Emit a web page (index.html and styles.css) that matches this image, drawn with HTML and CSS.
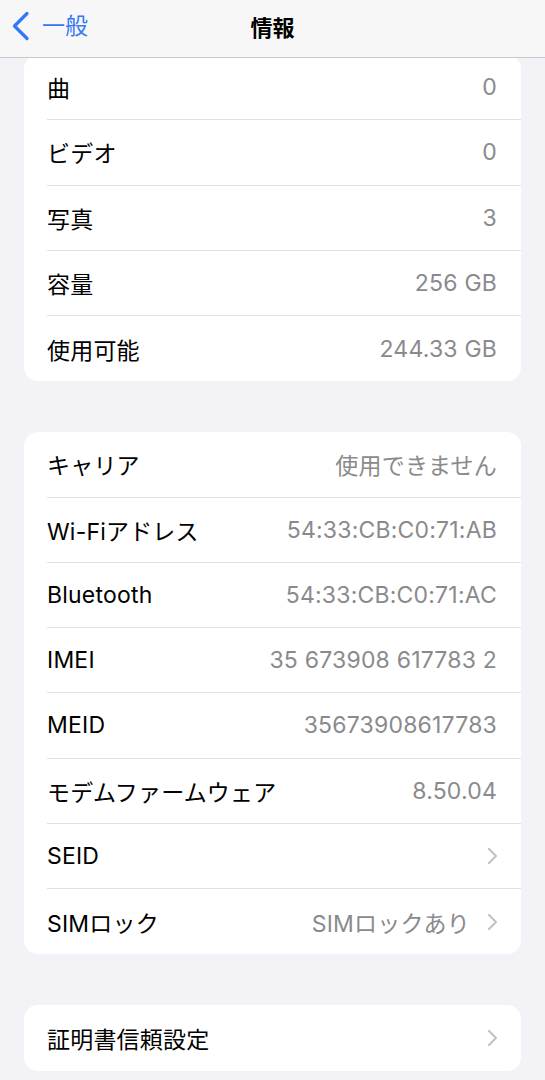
FILE: index.html
```html
<!DOCTYPE html>
<html lang="ja">
<head>
<meta charset="utf-8">
<link rel="stylesheet" href="styles.css">
</head>
<body>
<header class="nav">
  <div class="back">
    <svg class="back-icon" width="22" height="30" viewBox="0 0 22 30"><path d="M17 2.5 L4.5 15 L17 27.5" fill="none" stroke="#3478f6" stroke-width="3.3" stroke-linecap="round" stroke-linejoin="round"/></svg>
    <span class="back-text">一般</span>
  </div>
  <div class="title">情報</div>
</header>
<main class="content">
  <section class="card first">
    <div class="row"><span class="label">曲</span><span class="value">0</span></div>
    <div class="row"><span class="label">ビデオ</span><span class="value">0</span></div>
    <div class="row"><span class="label">写真</span><span class="value">3</span></div>
    <div class="row"><span class="label">容量</span><span class="value">256 GB</span></div>
    <div class="row"><span class="label">使用可能</span><span class="value">244.33 GB</span></div>
  </section>
  <section class="card">
    <div class="row"><span class="label">キャリア</span><span class="value">使用できません</span></div>
    <div class="row"><span class="label">Wi-Fiアドレス</span><span class="value">54:33:CB:C0:71:AB</span></div>
    <div class="row"><span class="label">Bluetooth</span><span class="value">54:33:CB:C0:71:AC</span></div>
    <div class="row"><span class="label">IMEI</span><span class="value">35 673908 617783 2</span></div>
    <div class="row"><span class="label">MEID</span><span class="value">35673908617783</span></div>
    <div class="row"><span class="label">モデムファームウェア</span><span class="value">8.50.04</span></div>
    <div class="row"><span class="label">SEID</span><span class="value"><svg class="chev" width="12" height="18" viewBox="0 0 12 18"><path d="M3 2 L10 9 L3 16" fill="none" stroke="#c4c4c7" stroke-width="2.2" stroke-linecap="round" stroke-linejoin="round"/></svg></span></div>
    <div class="row"><span class="label">SIMロック</span><span class="value">SIMロックあり<svg class="chev" width="12" height="18" viewBox="0 0 12 18"><path d="M3 2 L10 9 L3 16" fill="none" stroke="#c4c4c7" stroke-width="2.2" stroke-linecap="round" stroke-linejoin="round"/></svg></span></div>
  </section>
  <section class="card">
    <div class="row"><span class="label">証明書信頼設定</span><span class="value"><svg class="chev" width="12" height="18" viewBox="0 0 12 18"><path d="M3 2 L10 9 L3 16" fill="none" stroke="#c4c4c7" stroke-width="2.2" stroke-linecap="round" stroke-linejoin="round"/></svg></span></div>
  </section>
</main>
</body>
</html>
```
FILE: styles.css
```css
html, body {
  margin: 0;
  padding: 0;
  background: #f2f2f7;
  font-family: Inter, "Noto Sans CJK JP", sans-serif;
  -webkit-font-smoothing: antialiased;
}
.nav {
  position: fixed;
  top: 0;
  left: 0;
  right: 0;
  height: 57px;
  background: #f7f7f7;
  border-bottom: 1px solid #c9c9cb;
  display: flex;
  align-items: center;
  justify-content: center;
  z-index: 10;
}
.back {
  position: absolute;
  left: 10px;
  top: 11px;
  display: flex;
  align-items: center;
  gap: 10px;
}
.back-icon { display: block; }
.back-text {
  color: #3478f6;
  font-size: 23px;
  line-height: 30px;
}
.title {
  font-size: 22px;
  font-weight: 700;
  color: #000;
  margin-top: -6px;
}
.content {
  padding: 55px 24px 20px;
  display: flex;
  flex-direction: column;
  gap: 51px;
}
.card {
  background: #fff;
  border-radius: 14px;
  overflow: hidden;
}
.row {
  height: 65.25px;
  box-sizing: border-box;
  margin-left: 23px;
  padding-right: 24px;
  display: flex;
  align-items: center;
  justify-content: space-between;
  border-bottom: 1px solid #e1e1e3;
  font-size: 23px;
  letter-spacing: 0.2px;
}
.row:last-child { border-bottom: none; }
.label { color: #000; }
.value {
  color: #8a8a8e;
  display: flex;
  align-items: center;
  gap: 16px;
}
.chev { display: block; margin-right: -1px; }
```
